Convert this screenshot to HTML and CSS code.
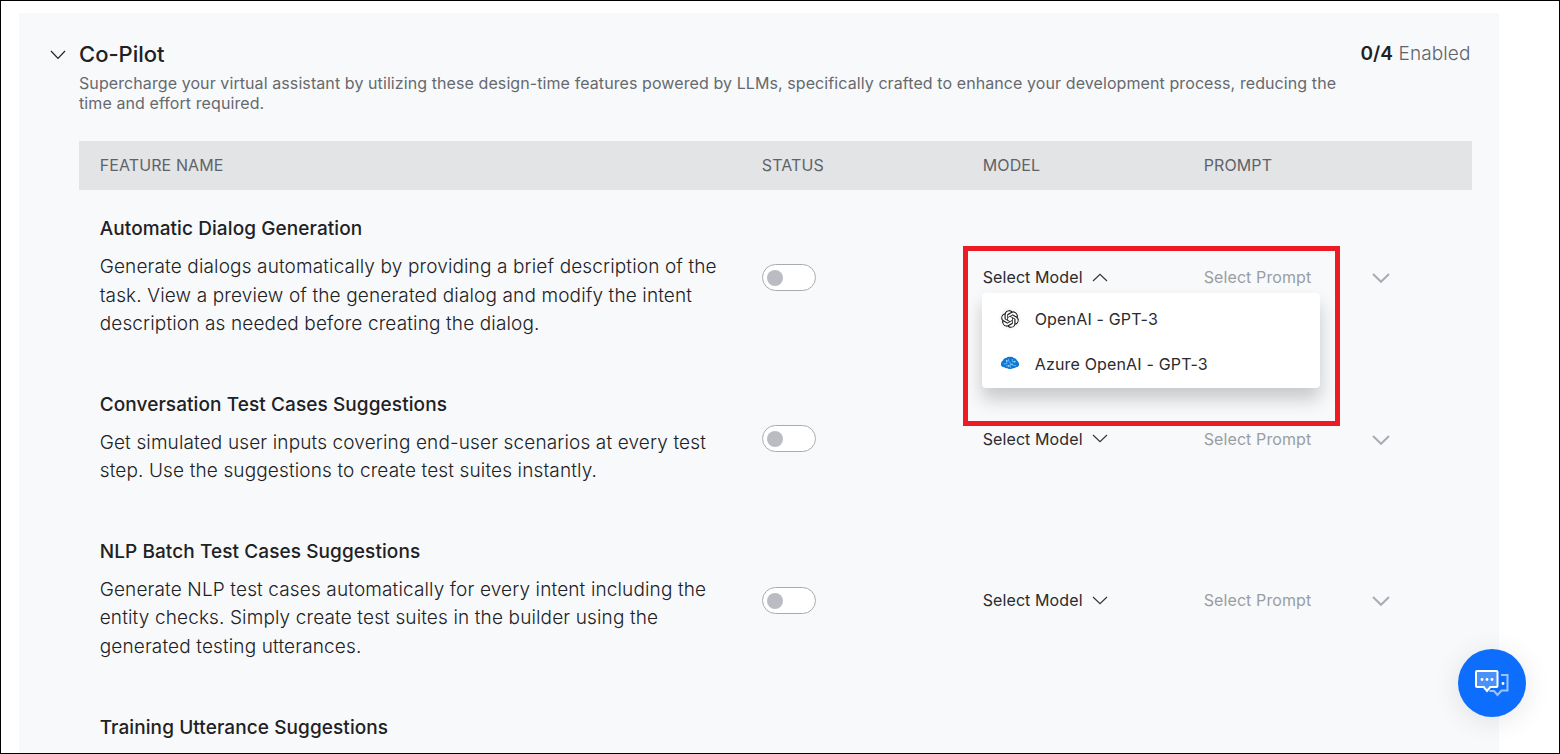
FILE: index.html
```html
<!DOCTYPE html>
<html lang="en">
<head>
<meta charset="utf-8">
<title>Co-Pilot</title>
<link rel="stylesheet" href="styles.css">
</head>
<body>
<main class="page">
  <section class="panel">
    <header class="panel-head">
      <svg class="collapse" viewBox="0 0 16 10" width="16" height="10"><path d="M1 1l7 7.4L15 1"/></svg>
      <div class="intro">
        <h1><span>Co-Pilot</span></h1>
        <p><span>Supercharge your virtual assistant by utilizing these design-time features powered by LLMs, specifically crafted to enhance your development process, reducing the</span><br><span>time and effort required.</span></p>
      </div>
      <div class="count"><b>0/4</b> <span>Enabled</span></div>
    </header>

    <div class="table">
      <div class="row head">
        <div><span>FEATURE NAME</span></div><div><span>STATUS</span></div><div><span>MODEL</span></div><div><span>PROMPT</span></div><div></div>
      </div>

      <div class="row">
        <div class="feature">
          <h2><span>Automatic Dialog Generation</span></h2>
          <p><span>Generate dialogs automatically by providing a brief description of the</span><br><span>task. View a preview of the generated dialog and modify the intent</span><br><span>description as needed before creating the dialog.</span></p>
        </div>
        <div><i class="toggle"></i></div>
        <div class="model"><span>Select Model</span>
          <svg class="chev" viewBox="0 0 16 9" width="16" height="9"><path d="M1 8l7-6.7L15 8"/></svg>
          <div class="highlight"></div>
          <div class="menu">
            <div class="option">
              <svg class="openai" viewBox="0 0 24 24" width="18" height="18"><path d="M22.2819 9.8211a5.9847 5.9847 0 0 0-.5157-4.9108 6.0462 6.0462 0 0 0-6.5098-2.9A6.0651 6.0651 0 0 0 4.9807 4.1818a5.9847 5.9847 0 0 0-3.9977 2.9 6.0462 6.0462 0 0 0 .7427 7.0966 5.98 5.98 0 0 0 .511 4.9107 6.051 6.051 0 0 0 6.5146 2.9001A5.9847 5.9847 0 0 0 13.2599 24a6.0557 6.0557 0 0 0 5.7718-4.2058 5.9894 5.9894 0 0 0 3.9977-2.9001 6.0557 6.0557 0 0 0-.7475-7.073zm-9.022 12.6081a4.4755 4.4755 0 0 1-2.8764-1.0408l.1419-.0804 4.7783-2.7582a.7948.7948 0 0 0 .3927-.6813v-6.7369l2.02 1.1686a.071.071 0 0 1 .038.052v5.5826a4.504 4.504 0 0 1-4.4945 4.4944zm-9.6607-4.1254a4.4708 4.4708 0 0 1-.5346-3.0137l.142.0852 4.783 2.7582a.7712.7712 0 0 0 .7806 0l5.8428-3.3685v2.3324a.0804.0804 0 0 1-.0332.0615L9.74 19.9502a4.4992 4.4992 0 0 1-6.1408-1.6464zM2.3408 7.8956a4.485 4.485 0 0 1 2.3655-1.9728V11.6a.7664.7664 0 0 0 .3879.6765l5.8144 3.3543-2.0201 1.1685a.0757.0757 0 0 1-.071 0l-4.8303-2.7865A4.504 4.504 0 0 1 2.3408 7.872zm16.5963 3.8558L13.1038 8.364 15.1192 7.2a.0757.0757 0 0 1 .071 0l4.8303 2.7913a4.4944 4.4944 0 0 1-.6765 8.1042v-5.6772a.79.79 0 0 0-.407-.667zm2.0107-3.0231l-.142-.0852-4.7735-2.7818a.7759.7759 0 0 0-.7854 0L9.409 9.2297V6.8974a.0662.0662 0 0 1 .0284-.0615l4.8303-2.7866a4.4992 4.4992 0 0 1 6.6802 4.66zM8.3065 12.863l-2.02-1.1638a.0804.0804 0 0 1-.038-.0567V6.0742a4.4992 4.4992 0 0 1 7.3757-3.4537l-.142.0805L8.704 5.459a.7948.7948 0 0 0-.3927.6813zm1.0976-2.3654l2.602-1.4998 2.6069 1.4998v2.9994l-2.5974 1.4997-2.6067-1.4997Z"/></svg>
              <span>OpenAI - GPT-3</span>
            </div>
            <div class="option">
              <svg class="azure" viewBox="0 0 18 18" width="18" height="18">
                <path class="brain" d="M0 10C-.2 8.200.3 6.600 1.700 5.700 2.200 3.900 3.700 2.800 5.200 2.900 6.300 1.900 8 1.600 9 2.100c1.300-.6 2.800-.2 3.800.8 1.600.1 3 1.300 3.400 2.900 1.400.8 2.100 2.600 1.800 4.200-.3 1.500-1.500 2.300-2.800 2.100-.7 1-2 1.300-3.100.9-.7.900-2 1.200-3 .8-1 .4-2.300.1-3-.8-1.100.4-2.400.1-3.100-.9C1.700 12.300.3 11.500 0 10z"/>
                <path class="nerves" d="M2.600 8.800h3.200V6M7.600 3.800v2.500l1.700 1.300v5.200M5 10.900h2.800M11.300 4v2.700h2.400M11 9.400l1.600 1.200h2.500"/>
                <circle cx="5.800" cy="5.800" r=".9"/><circle cx="13.700" cy="6.700" r=".9"/><circle cx="7.800" cy="10.900" r=".9"/><circle cx="11" cy="9.300" r=".9"/>
              </svg>
              <span>Azure OpenAI - GPT-3</span>
            </div>
          </div>
        </div>
        <div class="prompt"><span>Select Prompt</span></div>
        <svg class="expand" viewBox="0 0 20 12" width="20" height="12"><path d="M2 2l8 7.800L18 2"/></svg>
      </div>

      <div class="row">
        <div class="feature">
          <h2><span>Conversation Test Cases Suggestions</span></h2>
          <p><span>Get simulated user inputs covering end-user scenarios at every test</span><br><span>step. Use the suggestions to create test suites instantly.</span></p>
        </div>
        <div><i class="toggle"></i></div>
        <div class="model"><span>Select Model</span>
          <svg class="chev" viewBox="0 0 16 9" width="16" height="9"><path d="M1 1l7 6.700L15 1"/></svg></div>
        <div class="prompt"><span>Select Prompt</span></div>
        <svg class="expand" viewBox="0 0 20 12" width="20" height="12"><path d="M2 2l8 7.800L18 2"/></svg>
      </div>

      <div class="row">
        <div class="feature">
          <h2><span>NLP Batch Test Cases Suggestions</span></h2>
          <p><span>Generate NLP test cases automatically for every intent including the</span><br><span>entity checks. Simply create test suites in the builder using the</span><br><span>generated testing utterances.</span></p>
        </div>
        <div><i class="toggle"></i></div>
        <div class="model"><span>Select Model</span>
          <svg class="chev" viewBox="0 0 16 9" width="16" height="9"><path d="M1 1l7 6.700L15 1"/></svg></div>
        <div class="prompt"><span>Select Prompt</span></div>
        <svg class="expand" viewBox="0 0 20 12" width="20" height="12"><path d="M2 2l8 7.800L18 2"/></svg>
      </div>

      <div class="row">
        <div class="feature"><h2><span>Training Utterance Suggestions</span></h2></div>
      </div>
    </div>
  </section>
</main>
<div class="chat">
  <svg viewBox="0 0 36 34" width="36" height="34">
    <path class="back" d="M27 6h6.500v15.500h-6l-4 4.500-3.500-4h-4.500"/>
    <path class="front" d="M3 2h19.500a1 1 0 0 1 1 1v14a1 1 0 0 1-1 1h-6.200L13 22l-3.300-4H3a1 1 0 0 1-1-1V3a1 1 0 0 1 1-1z"/>
    <circle cx="8" cy="10.500" r="1.400"/><circle cx="13" cy="10.500" r="1.400"/><circle cx="18" cy="10.500" r="1.400"/><circle cx="29" cy="14.500" r="1.400"/>
  </svg>
</div>
</body>
</html>
```
FILE: styles.css
```css
* { box-sizing: border-box; }
body { margin: 0; font-family: Inter, "Liberation Sans", sans-serif; color: #202124; background: #fff; }
h1, h2, p { margin: 0; }
.page { height: 754px; border: 1px solid #000; padding: 12px 60px 0 18px; overflow: hidden; }
.panel { width: 1480px; height: 760px; padding: 27px 27px 0 31px; background: #f8f9fb; }
.panel-head { display: flex; height: 101px; }
.collapse { margin: 10px 13px 0 0; fill: none; stroke: #202124; stroke-width: 1.2; }
.intro { flex: 1; }
h1 { font-size: 22px; line-height: 28px; font-weight: 500; }
.intro p { margin-top: 5px; font-size: 16px; line-height: 20px; color: #66696e; white-space: nowrap; font-weight: 400; letter-spacing: .088px; }
.count { margin: 1px 1.500px 0 0; font-size: 19px; line-height: 26px; color: #5f6368; font-weight: 300; white-space: pre; letter-spacing: .1px; }
.count b { font-weight: 600; color: #202124; }
.table { margin-left: 29px; }
.row { display: grid; grid-template-columns: 662px 221px 221px 167px 1fr; align-items: center; padding: 25px 0 27.200px 20.700px; }
.head { height: 49px; padding: 0 0 2px 20.800px; background: #e3e4e6; color: #5f6368; font-size: 16px; letter-spacing: .09px; }
h2 { font-size: 19px; line-height: 28px; font-weight: 500; letter-spacing: .09px; }
.feature p { margin-top: 10px; font-size: 19px; line-height: 28.500px; font-weight: 300; letter-spacing: .135px; white-space: nowrap; }
.toggle { display: block; width: 54px; height: 27px; padding: 5px 4px; border: 1px solid #a9abb0; border-radius: 14px; background: #fff; }
.toggle::before { content: ""; display: block; width: 16px; height: 16px; border-radius: 50%; background: #babcc1; }
.row > div:nth-child(2), .model, .prompt, .expand { position: relative; top: .500px; }
.head > div:nth-child(2) { top: 0; }
.model { display: flex; align-items: center; gap: 8px; font-size: 16px; line-height: 24px; font-weight: 400; letter-spacing: .1px; color: #2a2b2e; }
.chev { margin-left: 1px; fill: none; stroke: #33363b; stroke-width: 1.200; }
.prompt { font-size: 16px; line-height: 24px; color: #9a9da2; font-weight: 400; letter-spacing: .1px; }
.expand { margin: 2px 0 0 .6px; fill: none; stroke: #a9adb3; stroke-width: 2; }
.highlight { position: absolute; left: -20px; top: -19.500px; width: 377px; height: 180px; border: 5px solid #ed1c24; z-index: 3; }
.menu { position: absolute; left: -1px; top: 28px; width: 338px; height: 95px; padding: 3px 19px 0; border-radius: 4px; background: #fff; box-shadow: 0 11px 18px rgba(0,0,0,.2); z-index: 2; }
.option { display: flex; align-items: center; gap: 16px; height: 45px; letter-spacing: .17px; }
.openai { fill: #202124; border-radius: 50%; box-shadow: 0 0 3px 1px #eee; }
.azure .brain { fill: #0f78d4; }
.azure .nerves { fill: none; stroke: #8cc8f4; stroke-width: .7; }
.azure circle { fill: #9dd2f8; }
.chat { position: absolute; left: 1458px; top: 649px; width: 68px; height: 68px; padding-top: 6px; display: grid; place-items: center; border-radius: 50%; background: #0d6efd; box-shadow: 0 4px 28px rgba(0,0,0,.1); }
.chat svg { fill: none; stroke-width: 2; }
.chat .back { stroke: #9cc3ff; }
.chat .front { stroke: #fff; fill: #4a91fb; }
.chat circle { fill: #fff; }
```
